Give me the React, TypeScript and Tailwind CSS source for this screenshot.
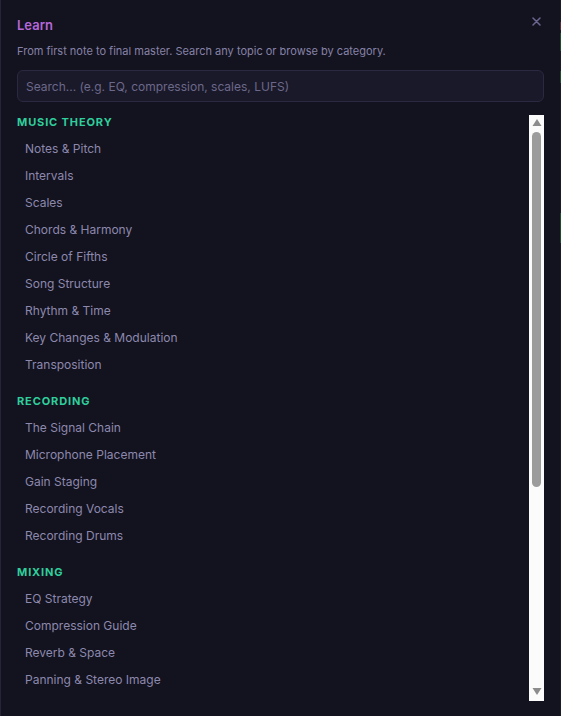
import React from "react";

const categories = [
  {
    title: "Music Theory",
    topics: [
      "Notes & Pitch",
      "Intervals",
      "Scales",
      "Chords & Harmony",
      "Circle of Fifths",
      "Song Structure",
      "Rhythm & Time",
      "Key Changes & Modulation",
      "Transposition",
    ],
  },
  {
    title: "Recording",
    topics: [
      "The Signal Chain",
      "Microphone Placement",
      "Gain Staging",
      "Recording Vocals",
      "Recording Drums",
    ],
  },
  {
    title: "Mixing",
    topics: [
      "EQ Strategy",
      "Compression Guide",
      "Reverb & Space",
      "Panning & Stereo Image",
    ],
  },
];

function CloseIcon() {
  return (
    <svg width="9" height="9" viewBox="0 0 9 9" fill="none">
      <path
        d="M1 1L8 8M8 1L1 8"
        stroke="#6a668f"
        strokeWidth="1.5"
        strokeLinecap="round"
      />
    </svg>
  );
}

function ScrollBar() {
  return (
    <div className="mt-px flex w-[15px] flex-col items-center bg-[#fbfbfb]">
      <svg width="10" height="14" viewBox="0 0 10 14" className="shrink-0">
        <path d="M5 4L9.5 11H0.5Z" fill="#8c8c8c" />
      </svg>
      <div className="mt-[3px] h-[355px] w-[9px] rounded-full bg-[#9c9c9c]" />
      <div className="flex-1" />
      <svg width="10" height="14" viewBox="0 0 10 14" className="mb-[2px] shrink-0">
        <path d="M0.5 3H9.5L5 10Z" fill="#8c8c8c" />
      </svg>
    </div>
  );
}

export default function App() {
  return (
    <div
      className="flex h-[716px] w-[561px] overflow-hidden bg-[#13121f]"
      style={{ fontFamily: "Inter, 'Noto Sans', sans-serif" }}
    >
      <div className="flex w-[560px] flex-col border-l border-[#26243a] bg-[#13121f] px-4 pt-4">
        <div className="flex items-start justify-between">
          <h2 className="mt-px text-[13px] font-semibold leading-4 text-[#b567d8]">
            Learn
          </h2>
          <button className="mr-[3px] mt-[1px] flex h-[9px] w-[9px] items-center justify-center">
            <CloseIcon />
          </button>
        </div>
        <p className="mt-[10px] text-[11px] leading-4 text-[#8682a6]">
          From first note to final master. Search any topic or browse by
          category.
        </p>
        <input
          className="mt-[11px] h-8 w-full rounded-md border border-[#2b2942] bg-[#1a1929] px-2 text-[12px] text-[#c9c6e0] outline-none placeholder:text-[#6c6889]"
          placeholder="Search... (e.g. EQ, compression, scales, LUFS)"
        />
        <div className="mt-[12px] flex h-[587px]">
          <div className="flex flex-1 flex-col gap-[15px] overflow-hidden">
            {categories.map((cat) => (
              <section key={cat.title}>
                <h3 className="mb-[5px] text-[11px] font-bold uppercase leading-4 tracking-[0.08em] text-[#2fcf9c]">
                  {cat.title}
                </h3>
                <ul>
                  {cat.topics.map((topic) => (
                    <li
                      key={topic}
                      className="flex h-[27px] items-center pl-2 text-[12px] text-[#8c89ad]"
                    >
                      {topic}
                    </li>
                  ))}
                </ul>
              </section>
            ))}
          </div>
          <ScrollBar />
        </div>
      </div>
      <div className="flex w-px flex-col bg-[#1b1a28]">
        <div className="mt-[22px] h-[8px] bg-[#5a2a33]" />
        <div className="mt-[3px] h-[18px] bg-[#1f4a2c]" />
        <div className="mt-[20px] h-[12px] bg-[#1f4a2c]" />
        <div className="mt-[130px] h-[30px] bg-[#1f4a2c]" />
      </div>
    </div>
  );
}
